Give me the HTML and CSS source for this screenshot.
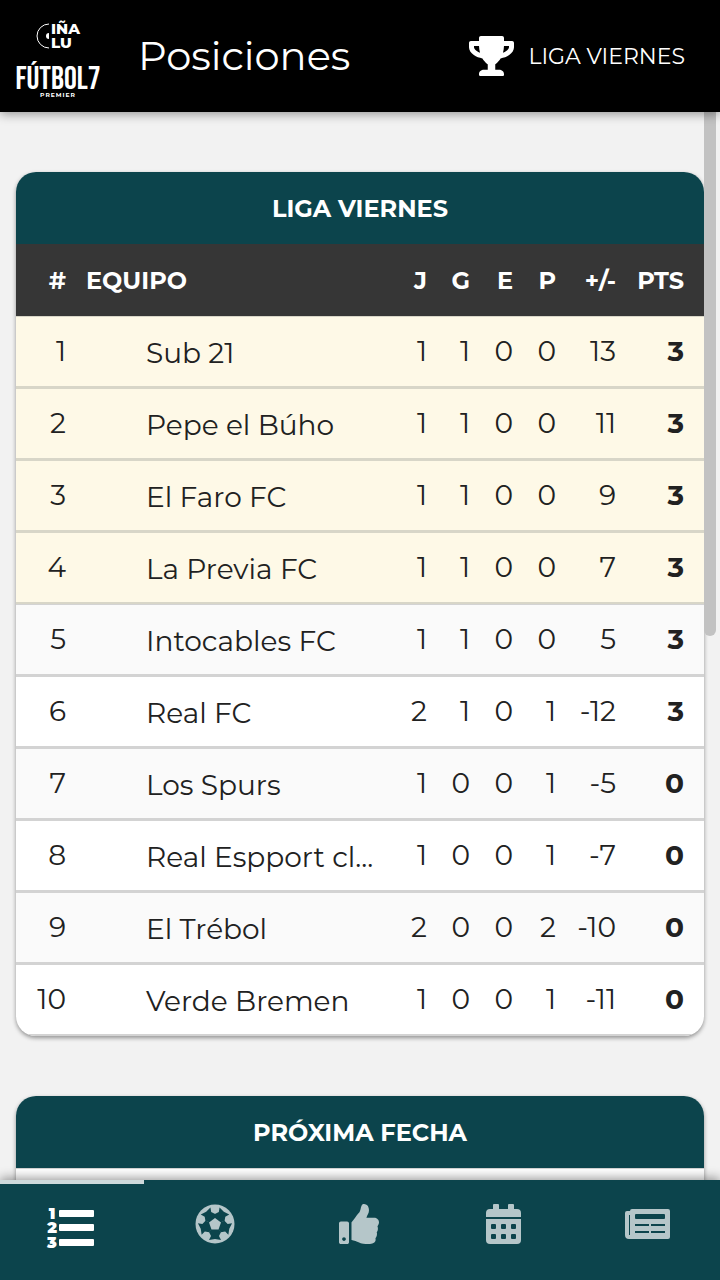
FILE: index.html
```html
<!DOCTYPE html>
<html lang="es">
<head>
<meta charset="UTF-8">
<meta name="viewport" content="width=device-width, initial-scale=1.0">
<title>Posiciones - Liga Viernes</title>
<link rel="stylesheet" href="styles.css">
</head>
<body>
<!-- Top bar -->
<header class="topbar">
  <svg class="logo" viewBox="0 0 84 84" role="img" aria-label="Ciñalu Fútbol 7 Premier">
    <path d="M33 10A12 12 0 0 0 33 34" fill="none" stroke="#fff" stroke-width="1"/>
    <path d="M33 19A3 3 0 0 0 33 25z" fill="#fff"/>
    <text class="logo-brand" x="35" y="20">IÑA</text>
    <text class="logo-brand" x="35" y="34">LU</text>
    <text class="logo-name" x="42" y="75">FÚTBOL7</text>
    <text class="logo-sub" x="42" y="83">PREMIER</text>
  </svg>
  <h1 class="page-title">Posiciones</h1>
  <button class="league" type="button">
    <svg class="league-icon" viewBox="0 0 576 512" aria-hidden="true"><path d="M552 64H448V24c0-13.300-10.700-24-24-24H152c-13.300 0-24 10.700-24 24v40H24C10.700 64 0 74.700 0 88v56c0 35.700 22.500 72.400 61.900 100.700 31.500 22.700 69.800 37.100 110 41.700C203.300 338.500 240 360 240 360v72h-48c-35.300 0-64 20.700-64 56v12c0 6.600 5.400 12 12 12h296c6.600 0 12-5.400 12-12v-12c0-35.300-28.700-56-64-56h-48v-72s36.700-21.500 68.100-73.600c40.300-4.600 78.600-19 110-41.700 39.300-28.300 61.900-65 61.900-100.700V88c0-13.300-10.700-24-24-24zM99.300 192.800C74.900 175.200 64 155.600 64 144v-16h64.200c1 32.600 5.800 61.200 12.800 86.200-15.100-5.200-29.200-12.400-41.700-21.400zM512 144c0 16.100-17.700 36.100-35.300 48.800-12.500 9-26.700 16.200-41.800 21.400 7-25 11.800-53.600 12.800-86.200H512v16z"/></svg>
    <span>LIGA VIERNES</span>
  </button>
</header>

<div class="content">
  <main class="scroller">
    <!-- Standings -->
    <section class="card">
      <h2 class="card-title">LIGA VIERNES</h2>
      <table class="standings">
        <colgroup>
          <col class="col-pos">
          <col>
          <col class="col-num">
          <col class="col-num">
          <col class="col-num">
          <col class="col-num">
          <col class="col-diff">
          <col class="col-pts">
        </colgroup>
        <thead>
          <tr><th>#</th><th class="team">EQUIPO</th><th>J</th><th>G</th><th>E</th><th>P</th><th>+/-</th><th class="pts">PTS</th></tr>
        </thead>
        <tbody>
          <tr class="qualified"><td>1</td><td class="team"><span class="name">Sub 21</span></td><td>1</td><td>1</td><td>0</td><td>0</td><td>13</td><td class="pts">3</td></tr>
          <tr class="qualified"><td>2</td><td class="team"><span class="name">Pepe el Búho</span></td><td>1</td><td>1</td><td>0</td><td>0</td><td>11</td><td class="pts">3</td></tr>
          <tr class="qualified"><td>3</td><td class="team"><span class="name">El Faro FC</span></td><td>1</td><td>1</td><td>0</td><td>0</td><td>9</td><td class="pts">3</td></tr>
          <tr class="qualified"><td>4</td><td class="team"><span class="name">La Previa FC</span></td><td>1</td><td>1</td><td>0</td><td>0</td><td>7</td><td class="pts">3</td></tr>
          <tr><td>5</td><td class="team"><span class="name">Intocables FC</span></td><td>1</td><td>1</td><td>0</td><td>0</td><td>5</td><td class="pts">3</td></tr>
          <tr><td>6</td><td class="team"><span class="name">Real FC</span></td><td>2</td><td>1</td><td>0</td><td>1</td><td>-12</td><td class="pts">3</td></tr>
          <tr><td>7</td><td class="team"><span class="name">Los Spurs</span></td><td>1</td><td>0</td><td>0</td><td>1</td><td>-5</td><td class="pts">0</td></tr>
          <tr><td>8</td><td class="team"><span class="name">Real Espport cl...</span></td><td>1</td><td>0</td><td>0</td><td>1</td><td>-7</td><td class="pts">0</td></tr>
          <tr><td>9</td><td class="team"><span class="name">El Trébol</span></td><td>2</td><td>0</td><td>0</td><td>2</td><td>-10</td><td class="pts">0</td></tr>
          <tr><td>10</td><td class="team"><span class="name">Verde Bremen</span></td><td>1</td><td>0</td><td>0</td><td>1</td><td>-11</td><td class="pts">0</td></tr>
        </tbody>
      </table>
    </section>

    <!-- Next fixtures -->
    <section class="card">
      <h2 class="card-title">PRÓXIMA FECHA</h2>
      <div class="card-body"></div>
    </section>
  </main>
  <div class="scroll-thumb"></div>
</div>

<!-- Bottom tabs -->
<nav class="tabs">
  <a class="tab active" href="#posiciones" aria-label="Posiciones">
    <svg class="tab-icon" viewBox="0 0 48 40" aria-hidden="true">
      <rect x="12" y="6" width="35" height="7" rx="1"/>
      <rect x="12" y="20" width="35" height="7" rx="1"/>
      <rect x="12" y="35" width="35" height="7" rx="1"/>
      <text class="list-num" x="5" y="15">1</text>
      <text class="list-num" x="5" y="29">2</text>
      <text class="list-num" x="5" y="44">3</text>
    </svg>
  </a>
  <a class="tab" href="#partidos" aria-label="Partidos">
    <svg class="tab-icon" viewBox="0 0 40 40" aria-hidden="true">
      <circle cx="20" cy="20" r="19.500"/>
      <g class="cut">
        <path d="M20 20L26 28L24 32L26 36L20 35L14 36L16 32L14 28z"/>
        <path transform="rotate(72 20 20)" d="M20 20L26 28L24 32L26 36L20 35L14 36L16 32L14 28z"/>
        <path transform="rotate(144 20 20)" d="M20 20L26 28L24 32L26 36L20 35L14 36L16 32L14 28z"/>
        <path transform="rotate(216 20 20)" d="M20 20L26 28L24 32L26 36L20 35L14 36L16 32L14 28z"/>
        <path transform="rotate(288 20 20)" d="M20 20L26 28L24 32L26 36L20 35L14 36L16 32L14 28z"/>
      </g>
      <path d="M20 14l6 4.500-2.500 7h-7L14 18.500z"/>
    </svg>
  </a>
  <a class="tab" href="#pronosticos" aria-label="Pronósticos">
    <svg class="tab-icon" viewBox="0 0 512 512" aria-hidden="true"><path d="M104 224H24c-13.255 0-24 10.745-24 24v240c0 13.255 10.745 24 24 24h80c13.255 0 24-10.745 24-24V248c0-13.255-10.745-24-24-24zM64 472c-13.255 0-24-10.745-24-24s10.745-24 24-24 24 10.745 24 24-10.745 24-24 24zM384 81.452c0 42.416-25.970 66.208-33.277 94.548h101.723c33.397 0 59.397 27.746 59.553 58.098.084 17.938-7.546 37.249-19.439 49.197l-.110.110c9.836 23.337 8.237 56.037-9.308 79.469 8.681 25.895-.069 57.704-16.382 74.757 4.298 17.598 2.244 32.575-6.148 44.632C440.202 511.587 389.616 512 346.839 512l-2.845-.001c-48.287-.017-87.806-17.598-119.560-31.725-15.957-7.099-36.821-15.887-52.651-16.178-6.540-.120-11.783-5.457-11.783-11.998v-213.770c0-3.200 1.282-6.271 3.558-8.521 39.614-39.144 56.648-80.587 89.117-113.111 14.804-14.832 20.188-37.236 25.393-58.902C282.515 39.293 291.817 0 312 0c24 0 72 8 72 81.452z"/></svg>
  </a>
  <a class="tab" href="#calendario" aria-label="Calendario">
    <svg class="tab-icon" viewBox="0 0 35 40" aria-hidden="true">
      <path d="M0 13V9a4 4 0 0 1 4-4h3V1a1 1 0 0 1 1-1h4a1 1 0 0 1 1 1v4h9V1a1 1 0 0 1 1-1h4a1 1 0 0 1 1 1v4h3a4 4 0 0 1 4 4v4z"/>
      <path d="M0 15h35v21a4 4 0 0 1-4 4H4a4 4 0 0 1-4-4z"/>
      <g class="cut">
        <rect x="5" y="20" width="5" height="5" rx="1"/><rect x="15" y="20" width="5" height="5" rx="1"/><rect x="25" y="20" width="5" height="5" rx="1"/>
        <rect x="5" y="30" width="5" height="5" rx="1"/><rect x="15" y="30" width="5" height="5" rx="1"/><rect x="25" y="30" width="5" height="5" rx="1"/>
      </g>
    </svg>
  </a>
  <a class="tab" href="#noticias" aria-label="Noticias">
    <svg class="tab-icon" viewBox="0 0 45 40" aria-hidden="true">
      <path d="M7 5h36a2 2 0 0 1 2 2v26a2 2 0 0 1-2 2H4a4 4 0 0 1-4-4V9a2 2 0 0 1 2-2h3a2 2 0 0 1 2-2z"/>
      <g class="cut">
        <rect x="4" y="11" width="1" height="20"/>
        <rect x="10" y="10" width="30" height="5" rx="1"/>
        <rect x="10" y="20" width="14" height="2"/><rect x="26" y="20" width="14" height="2"/>
        <rect x="10" y="27" width="14" height="2"/><rect x="26" y="27" width="14" height="2"/>
      </g>
    </svg>
  </a>
</nav>
</body>
</html>
```
FILE: styles.css
```css
* {
  box-sizing: border-box;
}
body {
  margin: 0;
  height: 100vh;
  display: flex;
  flex-direction: column;
  background-color: #f2f2f2;
  color: #212121;
  font-family: Montserrat, Inter, "Open Sans", sans-serif;
}

/* Top bar */
.topbar {
  display: flex;
  align-items: center;
  flex: none;
  height: 112px;
  padding: 0 35px 0 16px;
  background-color: #000;
  color: #fff;
  box-shadow: 0 2px 10px rgba(0, 0, 0, 0.4);
  z-index: 2;
}
.logo {
  width: 84px;
  height: 84px;
  fill: #fff;
  overflow: visible;
}
.logo-brand {
  font-size: 15px;
  font-weight: 800;
}
.logo-name {
  font-family: "Bebas Neue", Oswald, "Roboto Condensed", Roboto, sans-serif;
  font-size: 32px;
  font-weight: 400;
  text-anchor: middle;
}
.logo-sub {
  font-size: 6px;
  font-weight: 700;
  letter-spacing: 1px;
  text-anchor: middle;
}
.page-title {
  flex: 1;
  margin: 0 0 2px 38px;
  font-size: 40px;
  font-weight: 400;
}
.league {
  display: flex;
  align-items: center;
  gap: 14px;
  padding: 0;
  border: 0;
  background: none;
  color: #fff;
  font-family: inherit;
  font-size: 22px;
}
.league-icon {
  width: 45px;
  height: 40px;
  fill: #fff;
}

/* Scrolling content */
.content {
  position: relative;
  flex: 1;
  min-height: 0;
}
.scroller {
  height: 100%;
  padding: 60px 16px;
  overflow-y: auto;
  scrollbar-width: none;
}
.scroll-thumb {
  position: absolute;
  top: 0;
  right: 4px;
  width: 12px;
  height: 524px;
  border-radius: 0 0 6px 6px;
  background-color: #c2c2c2;
}

/* Cards */
.card {
  margin-bottom: 60px;
  border-radius: 20px;
  background-color: #fff;
  box-shadow: 0 2px 4px rgba(0, 0, 0, 0.4);
  overflow: hidden;
}
.card-title {
  margin: 0;
  padding-top: 2px;
  background-color: #0c444c;
  color: #fff;
  font-size: 24px;
  font-weight: 700;
  line-height: 70px;
  text-align: center;
}
.card-body {
  height: 288px;
  border-top: 1px solid #d3d3d3;
}

/* Standings table */
.standings {
  width: 100%;
  table-layout: fixed;
  border-collapse: separate;
  border-spacing: 0;
  font-size: 28px;
}
.col-pos {
  width: 60px;
}
.col-num {
  width: 43px;
}
.col-diff {
  width: 60px;
}
.col-pts {
  width: 78px;
}
.standings th {
  height: 72px;
  padding: 0 10px 0 0;
  background-color: #363636;
  color: #fff;
  font-size: 24px;
  text-align: right;
}
.standings td {
  height: 72px;
  padding: 0 10px 2px 0;
  border-top: 1px solid #d3d3d3;
  border-bottom: 2px solid #d3d3d3;
  text-align: right;
  white-space: nowrap;
}
.standings tbody tr:nth-child(odd) {
  background-color: #fafafa;
}
.standings tbody tr.qualified {
  background-color: #fef9e7;
}
.standings .qualified td {
  border-color: #d8d6c8;
}
.standings .team {
  padding-left: 10px;
  text-align: left;
}
.standings .pts {
  padding-right: 20px;
  font-weight: 700;
}
.name {
  display: block;
  padding: 4px 0 0 60px;
}

/* Bottom tabs */
.tabs {
  display: flex;
  flex: none;
  height: 100px;
  background-color: #0c444c;
  box-shadow: 0 -2px 10px rgba(0, 0, 0, 0.4);
  z-index: 2;
}
.tab {
  display: flex;
  flex: 1;
  justify-content: center;
  padding: 20px 2px 0 0;
  border-top: 4px solid transparent;
}
.tab.active {
  border-top-color: #ced9db;
}
.tab-icon {
  height: 40px;
  fill: #b5c6c9;
  overflow: visible;
}
.active .tab-icon {
  fill: #fff;
}
.list-num {
  font-family: Montserrat, "DejaVu Sans Condensed", sans-serif;
  font-size: 16px;
  font-weight: 900;
  text-anchor: middle;
}
.tab-icon .cut {
  fill: #0c444c;
}
```
